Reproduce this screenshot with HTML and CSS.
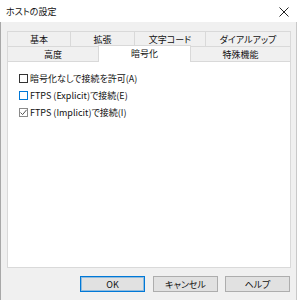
FILE: index.html
```html
<!DOCTYPE html>
<html lang="ja">
<head>
<meta charset="utf-8">
<link rel="stylesheet" href="styles.css">
</head>
<body>
<div class="window">
  <div class="titlebar">
    <span class="title">ホストの設定</span>
    <svg class="close" width="10" height="10" viewBox="0 0 10 10"><path d="M0.5 0.5 L9.5 9.5 M9.5 0.5 L0.5 9.5" stroke="#222" stroke-width="1" fill="none"/></svg>
  </div>
  <div class="body">
    <div class="tabs">
      <div class="row">
        <div class="tab w1">基本</div>
        <div class="tab w2">拡張</div>
        <div class="tab w3">文字コード</div>
        <div class="tab w4">ダイアルアップ</div>
      </div>
      <div class="row">
        <div class="tab w5">高度</div>
        <div class="tab w6 active">暗号化</div>
        <div class="tab w7">特殊機能</div>
      </div>
    </div>
    <div class="panel">
      <label class="check"><span class="box"></span><span>暗号化なしで接続を許可(A)</span></label>
      <label class="check"><span class="box focus"></span><span>FTPS (Explicit)で接続(E)</span></label>
      <label class="check"><span class="box checked"><svg width="9" height="9" viewBox="0 0 9 9"><path d="M1.5 4.5 L3.6 6.6 L7.6 1.8" stroke="#555" stroke-width="1" fill="none"/></svg></span><span>FTPS (Implicit)で接続(I)</span></label>
    </div>
    <div class="buttons">
      <div class="btn default">OK</div>
      <div class="btn">キャンセル</div>
      <div class="btn">ヘルプ</div>
    </div>
  </div>
</div>
</body>
</html>
```
FILE: styles.css
```css
html, body {
  margin: 0;
  padding: 0;
}
body {
  width: 297px;
  height: 300px;
  overflow: hidden;
  font-family: "Noto Sans CJK JP", "Noto Sans", sans-serif;
  font-size: 9px;
  font-feature-settings: "palt";
  color: #000;
  background: #f0f0f0;
}
.window {
  width: 297px;
  height: 300px;
  display: flex;
  flex-direction: column;
}
.titlebar {
  height: 22px;
  background: #fff;
  display: flex;
  align-items: center;
  justify-content: space-between;
  padding: 0 8px 0 6px;
  flex: none;
}
.title {
  font-size: 9px;
  color: #111;
}
.close {
  display: block;
  margin-top: 1px;
}
.body {
  flex: 1;
  background: #f0f0f0;
  border-left: 1px solid #a8a8a8;
  border-right: 1px solid #c8c8c8;
  padding: 0 6px 0 6px;
}
.tabs {
  margin-top: 9px;
}
.row {
  display: flex;
  height: 15px;
}
.tab {
  box-sizing: border-box;
  height: 15px;
  border: 1px solid #d9d9d9;
  border-bottom: none;
  margin-right: -1px;
  background: #f0f0f0;
  display: flex;
  align-items: center;
  justify-content: center;
  line-height: 1;
  color: #111;
}
.w1 { width: 64px; }
.w2 { width: 65px; }
.w3 { width: 72px; }
.w4 { width: 86px; }
.w5 { width: 92px; }
.w6 { width: 93px; }
.w7 { width: 101px; }
.tab.active {
  background: #fff;
  height: 17px;
  margin-top: -1px;
  position: relative;
  z-index: 1;
  padding-left: 0;
  padding-bottom: 1px;
}
.panel {
  box-sizing: border-box;
  width: 284px;
  height: 207px;
  background: #fff;
  border: 1px solid #d9d9d9;
  padding: 8px 0 0 11px;
}
.check {
  display: flex;
  align-items: center;
  height: 17px;
  gap: 2px;
  color: #111;
}
.box {
  box-sizing: border-box;
  width: 9px;
  height: 9px;
  border: 1px solid #333;
  background: #fff;
  flex: none;
  position: relative;
}
.box.focus {
  border-color: #0078d7;
}
.box.checked {
  border-color: #8a8a8a;
}
.box svg {
  position: absolute;
  left: -1px;
  top: -1px;
}
.buttons {
  display: flex;
  justify-content: flex-end;
  gap: 7px;
  margin-top: 8px;
  padding-right: 0;
}
.btn {
  box-sizing: border-box;
  width: 65px;
  height: 16px;
  background: #e1e1e1;
  border: 1px solid #adadad;
  display: flex;
  align-items: center;
  justify-content: center;
  line-height: 1;
  color: #111;
}
.btn.default {
  border-color: #0078d7;
  box-shadow: inset 0 0 0 1px rgba(0, 120, 215, 0.35);
  margin-right: 1px;
}
```
